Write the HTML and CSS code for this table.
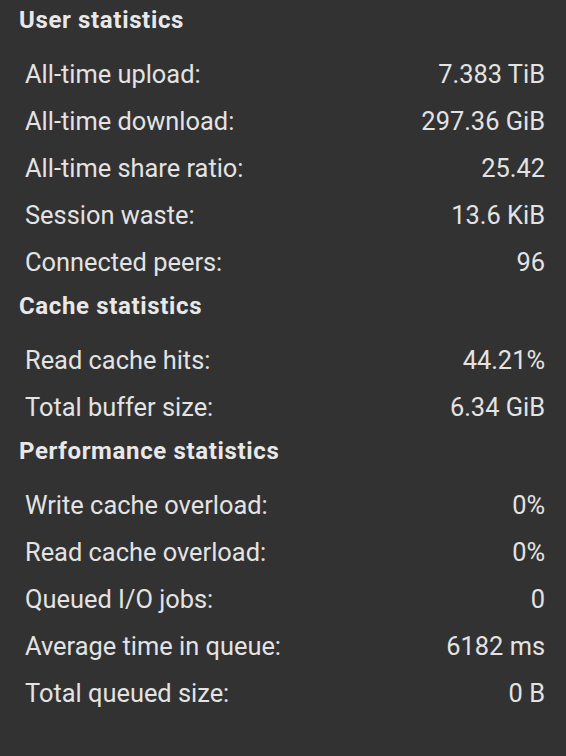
FILE: index.html
```html
<!DOCTYPE html>
<html>
<head>
<meta charset="utf-8">
<link rel="stylesheet" href="styles.css">
</head>
<body>
<div class="panel">
  <section class="group">
    <h2 class="title">User statistics</h2>
    <div class="row"><span>All-time upload:</span><span>7.383 TiB</span></div>
    <div class="row"><span>All-time download:</span><span>297.36 GiB</span></div>
    <div class="row"><span>All-time share ratio:</span><span>25.42</span></div>
    <div class="row"><span>Session waste:</span><span>13.6 KiB</span></div>
    <div class="row"><span>Connected peers:</span><span>96</span></div>
  </section>
  <section class="group">
    <h2 class="title">Cache statistics</h2>
    <div class="row"><span>Read cache hits:</span><span>44.21%</span></div>
    <div class="row"><span>Total buffer size:</span><span>6.34 GiB</span></div>
  </section>
  <section class="group">
    <h2 class="title">Performance statistics</h2>
    <div class="row"><span>Write cache overload:</span><span>0%</span></div>
    <div class="row"><span>Read cache overload:</span><span>0%</span></div>
    <div class="row"><span>Queued I/O jobs:</span><span>0</span></div>
    <div class="row"><span>Average time in queue:</span><span>6182 ms</span></div>
    <div class="row"><span>Total queued size:</span><span>0 B</span></div>
  </section>
</div>
</body>
</html>
```

FILE: styles.css
```css
html, body {
  margin: 0;
  padding: 0;
  background: #323232;
}
body {
  font-family: Roboto, "Noto Sans", sans-serif;
  color: #e3e3e3;
  height: 756px;
}
.panel {
  padding: 0 21px 0 19px;
}
.title {
  margin: 0 0 12px 0;
  height: 39px;
  display: flex;
  align-items: center;
  font-size: 24px;
  letter-spacing: 0.65px;
  font-weight: 700;
  color: #e8e8e8;
}
.row {
  height: 47px;
  box-sizing: border-box;
  padding-bottom: 2px;
  display: flex;
  align-items: center;
  justify-content: space-between;
  padding-left: 6px;
  font-size: 25.4px;
  font-weight: 400;
}
```
